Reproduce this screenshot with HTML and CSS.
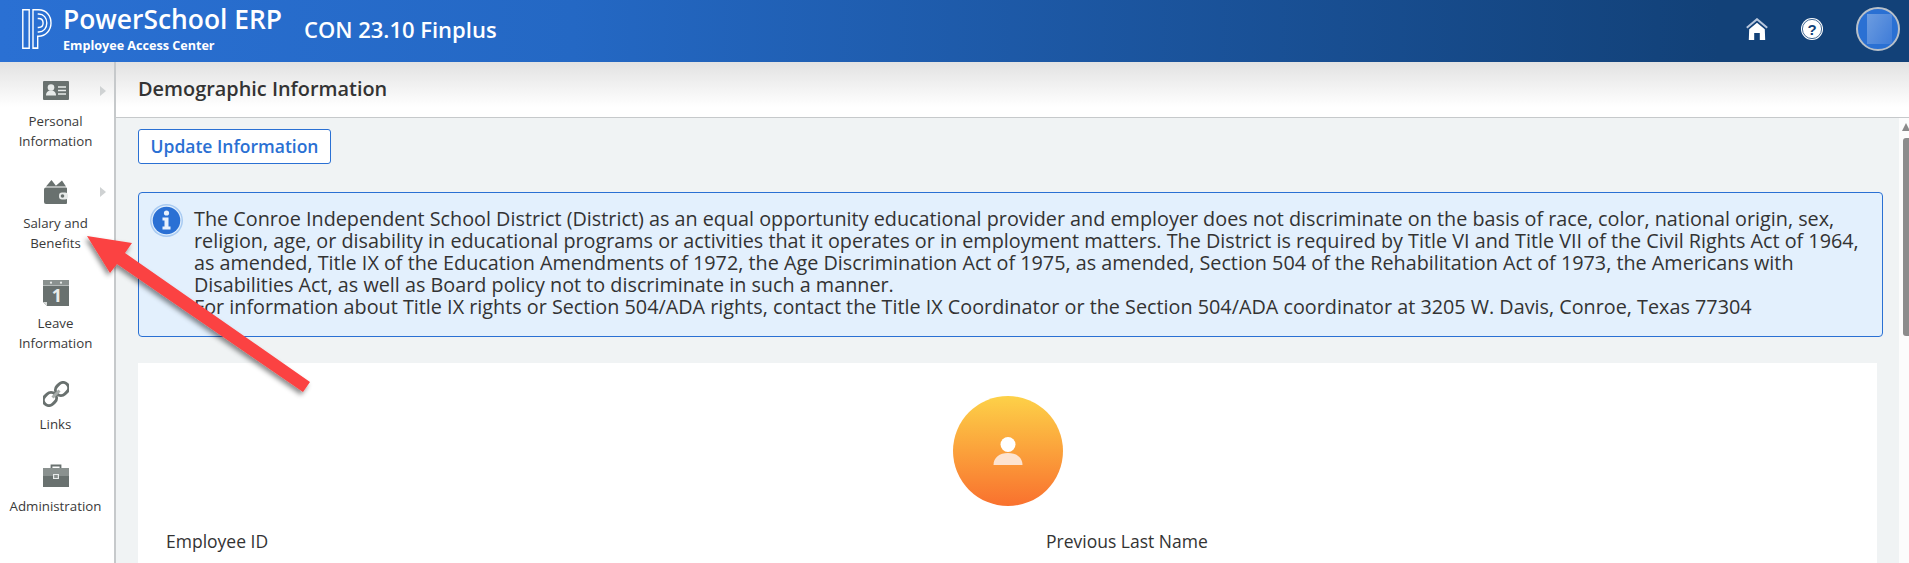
FILE: index.html
```html
<!DOCTYPE html>
<html lang="en">
<head>
<meta charset="utf-8">
<title>Demographic Information</title>
<link rel="stylesheet" href="styles.css">
</head>
<body>
<header class="topbar">
  <svg class="logo" width="30" height="40" viewBox="0 0 30 40" fill="none" stroke="#fff" stroke-width="1.4">
    <path d="M.8.8h6.400v38.400H.8z"/>
    <path d="M11 39.200V.8h5.500C24.500.8 29 7 29 14S24 27.200 16.500 27.200h-.8v12z"/>
    <path d="M11 39.200h4.700"/>
    <path d="M15.700 5h1C21.700 5 24.800 9 24.800 14S21.700 23 16.700 23h-1"/>
    <path d="M15.700 9.500h1c2.800 0 4.400 2 4.400 4.500s-1.600 4.500-4.400 4.500h-1"/>
  </svg>
  <div class="brand">
    <div class="brand-name">PowerSchool ERP</div>
    <div class="brand-sub">Employee Access Center</div>
  </div>
  <div class="env">CON 23.10 Finplus</div>
  <div class="top-actions">
    <svg class="home" width="22" height="22" viewBox="0 0 22 22">
      <path d="M.8 9.800 11 1.200l10.200 8.600" fill="none" stroke="#b9c7dc" stroke-width="2"/>
      <path d="M11 4.800 3.200 11.200 2.800 22h5.400v-7h5.600v7h5.400l-.4-10.800z" fill="#fff"/>
    </svg>
    <svg class="help" width="22" height="22" viewBox="0 0 22 22">
      <circle cx="11" cy="11" r="11" fill="#fff"/>
      <circle cx="11" cy="11" r="9.600" fill="none" stroke="#124178" stroke-width=".8"/>
      <text x="11" y="16.500" text-anchor="middle" class="help-mark">?</text>
    </svg>
    <div class="avatar"><span class="avatar-inner"></span></div>
  </div>
</header>
<div class="shell">
  <nav class="sidebar">
    <a class="nav-item item-personal">
      <span class="nav-icon">
        <svg width="26" height="19" viewBox="0 0 26 19"><path d="M1 0h24a1 1 0 0 1 1 1v17a1 1 0 0 1-1 1H1a1 1 0 0 1-1-1V1a1 1 0 0 1 1-1z" fill="#69716f"/><circle cx="8" cy="6.500" r="3.300" fill="#e8ebea"/><path d="M3 14.500c0-3.500 2-5 5-5s5 1.500 5 5z" fill="#e8ebea"/><path d="M15 6h8M15 9.500h8M15 13h8" stroke="#e8ebea" stroke-width="1.300"/></svg>
      </span>
      <span class="nav-arrow"></span>
      <span class="nav-label">Personal<br>Information</span>
    </a>
    <a class="nav-item item-salary">
      <span class="nav-icon">
        <svg width="24" height="24" viewBox="0 0 24 24"><path d="M2 6.500 7.500 0l5 6.500zM11 6.500 18 .5l4 6z" fill="#69716f"/><path d="M2 7.500h20a1 1 0 0 1 1 1V23a1 1 0 0 1-1 1H2a2 2 0 0 1-2-2V9.500a2 2 0 0 1 2-2z" fill="#69716f"/><rect x="15" y="12.500" width="9" height="7" rx="3" fill="#e8ebea"/><circle cx="18.500" cy="16" r="1.800" fill="#69716f"/></svg>
      </span>
      <span class="nav-arrow"></span>
      <span class="nav-label">Salary and<br>Benefits</span>
    </a>
    <a class="nav-item item-leave">
      <span class="nav-icon">
        <svg width="26" height="26" viewBox="0 0 26 26"><path d="M0 0h26v26H4l-4-4z" fill="#69716f"/><path d="M0 0h26v5H0z" fill="#8a918f"/><path d="M0 5.500h26" stroke="#e8ebea" stroke-width=".6"/><circle cx="8" cy="2.700" r="1.100" fill="#e8ebea"/><circle cx="18" cy="2.700" r="1.100" fill="#e8ebea"/><path d="M0 22h4v4z" fill="#d5d8d7"/><text x="14" y="22" text-anchor="middle" class="cal-num">1</text></svg>
      </span>
      <span class="nav-label">Leave<br>Information</span>
    </a>
    <a class="nav-item item-links">
      <span class="nav-icon">
        <svg width="26" height="26" viewBox="0 0 26 26" fill="none" stroke="#69716f" stroke-width="3"><rect x="13.500" y="1" width="11" height="14" rx="5.500" transform="rotate(45 19 8)"/><rect x="1.500" y="11" width="11" height="14" rx="5.500" transform="rotate(45 7 18)"/><path d="M9.500 16.500l7-7" stroke="#a6acaa"/></svg>
      </span>
      <span class="nav-label">Links</span>
    </a>
    <a class="nav-item item-admin">
      <span class="nav-icon">
        <svg width="26" height="23" viewBox="0 0 26 23"><path d="M8.500 5V1.500h9V5" fill="none" stroke="#69716f" stroke-width="1.800"/><path d="M0 4h26v8H0z" fill="#8a918f"/><path d="M0 12h26v11H0z" fill="#69716f"/><rect x="10" y="10" width="6" height="5" fill="#e8ebea"/><rect x="11.200" y="11" width="3.600" height="3" fill="#8a918f"/></svg>
      </span>
      <span class="nav-label">Administration</span>
    </a>
  </nav>
  <main class="main">
    <div class="page-title">Demographic Information</div>
    <div class="content">
      <button class="btn-outline">Update Information</button>
      <div class="notice">
        <svg class="notice-icon" width="33" height="33" viewBox="0 0 33 33">
          <circle cx="16.500" cy="16.500" r="16.500" fill="#a9cbf2"/>
          <circle cx="16.500" cy="16.500" r="15" fill="#e3f0fd"/>
          <circle cx="16.500" cy="16.500" r="13.800" fill="#2a70d4"/>
          <circle cx="16.500" cy="9" r="2.600" fill="#e8f1fc"/>
          <path d="M12.500 13.500h6v9h2v3h-8v-3h2v-6h-2z" fill="#e8f1fc"/>
        </svg>
        <div class="notice-text">The Conroe Independent School District (District) as an equal opportunity educational provider and employer does not discriminate on the basis of race, color, national origin, sex, religion, age, or disability in educational programs or activities that it operates or in employment matters. The District is required by Title VI and Title VII of the Civil Rights Act of 1964, as amended, Title IX of the Education Amendments of 1972, the Age Discrimination Act of 1975, as amended, Section 504 of the Rehabilitation Act of 1973, the Americans with Disabilities Act, as well as Board policy not to discriminate in such a manner.<br>For information about Title IX rights or Section 504/ADA rights, contact the Title IX Coordinator or the Section 504/ADA coordinator at 3205 W. Davis, Conroe, Texas 77304</div>
      </div>
      <section class="card">
        <div class="photo">
          <svg width="30" height="30" viewBox="0 0 30 30"><circle cx="15" cy="8.500" r="7.500" fill="#fff"/><path d="M0.500 29c0-7.500 6-12 14.500-12s14.500 4.500 14.500 12z" fill="#fde3cf"/></svg>
        </div>
        <div class="fields">
          <div class="field">Employee ID</div>
          <div class="field">Previous Last Name</div>
        </div>
      </section>
    </div>
    <div class="scroller"><span class="scroll-up"></span><span class="scroll-thumb"></span></div>
  </main>
</div>
<svg class="annotation" width="340" height="200" viewBox="0 0 340 200">
  <defs><filter id="sh" x="-10%" y="-10%" width="120%" height="120%"><feDropShadow dx="-2" dy="3" stdDeviation="2.500" flood-color="#000" flood-opacity=".45"/></filter></defs>
  <path d="M87 16l45 7-7 10 185 129-7 10L117 44l-7 9z" fill="#fb4242" filter="url(#sh)"/>
</svg>
</body>
</html>
```
FILE: styles.css
```css
* { box-sizing: border-box; }
html, body { margin: 0; height: 100%; overflow: hidden; }
body { font-family: "Open Sans", "Noto Sans", sans-serif; color: #333; background: #fff; position: relative; }

.topbar {
  height: 62px;
  display: flex;
  align-items: flex-start;
  padding-left: 22px;
  background: linear-gradient(90deg, #2a70d3 0%, #2468c4 30%, #124178 90%, #124178 100%);
  color: #fff;
}
.logo { flex: none; margin: 9px 11px 0 0; }
.brand { display: flex; flex-direction: column; width: 241px; padding-top: 4px; }
.brand-name { font-size: 26.400px; line-height: 30px; font-weight: 600; }
.brand-sub { font-size: 12.600px; line-height: 15px; font-weight: 700; margin-top: 4px; }
.env { font-size: 22px; font-weight: 600; line-height: 28px; margin-top: 15px; }
.top-actions { margin-left: auto; display: flex; align-items: center; padding: 7px 9px 0 0; }
.home { margin-right: 33px; }
.help { margin-right: 33px; }
.help-mark { font: 700 15px "Liberation Sans", sans-serif; fill: #124178; }
.avatar {
  width: 44px; height: 44px; border-radius: 50%;
  border: 2px solid #b8c0c9;
  background: #2a70d3;
  display: flex; align-items: center; justify-content: flex-end;
  padding-right: 6px;
  overflow: hidden;
}
.avatar-inner { width: 25px; height: 30px; background: linear-gradient(120deg, #6c9ce0, #3f7cd8); }

.shell { display: flex; height: 501px; overflow: hidden; }
.sidebar {
  width: 116px; flex: none;
  border-right: 2px solid #c6c9cb;
  background: linear-gradient(180deg, #e2e2e2 0, #fff 45px);
  padding: 19px 3px 0 0;
}
.nav-item { display: block; position: relative; text-align: center; color: #3a3a3a; font-size: 13.300px; line-height: 19.500px; }
.nav-icon { display: flex; justify-content: center; }
.nav-label { display: block; }
.nav-arrow {
  position: absolute; right: 5px; top: 5px;
  border-left: 6px solid #cfd2d3; border-top: 5px solid transparent; border-bottom: 5px solid transparent;
}
.item-personal .nav-label { margin-top: 12px; }
.item-salary { margin-top: 29px; }
.item-salary .nav-label { margin-top: 10px; }
.item-salary .nav-arrow { top: 7px; }
.item-leave { margin-top: 27px; }
.item-leave .nav-label { margin-top: 8px; }
.cal-num { font: 700 18px "Open Sans", sans-serif; fill: #e8ebea; }
.item-links { margin-top: 28px; }
.item-links .nav-label { margin-top: 8px; }
.item-admin { margin-top: 29px; }
.item-admin .nav-label { margin-top: 10px; }

.main { flex: 1; min-width: 0; position: relative; overflow: hidden; background: #f0f3f4; display: flex; flex-direction: column; }
.page-title {
  height: 56px; flex: none;
  background: linear-gradient(180deg, #e2e2e2 0, #fff 45px);
  border-bottom: 1px solid #c6c9cb;
  font-size: 19.900px; font-weight: 600; color: #333;
  padding: 14px 0 0 22px; line-height: 25px;
}
.content { padding: 11px 26px 0 22px; }
.btn-outline {
  display: block;
  width: 193px; height: 35px;
  padding: 0;
  background: #fff;
  border: 1px solid #2a70d3;
  border-radius: 3px;
  color: #2a70d3;
  font: 600 17.500px/33px "Open Sans", sans-serif;
}
.notice {
  margin-top: 28px;
  height: 145px;
  background: #e3f0fd;
  border: 1px solid #2a70d3;
  border-radius: 4px;
  display: flex;
  padding: 11px 0 0 11px;
}
.notice-icon { flex: none; margin-right: 11px; }
.notice-text { font-size: 19.800px; line-height: 22px; color: #333; margin-top: 4px; padding-right: 12px; }
.card { margin: 26px 6px 0 0; background: #fff; height: 230px; }
.photo {
  width: 110px; height: 110px; border-radius: 50%;
  margin: 0 auto;
  position: relative; top: 33px;
  background: linear-gradient(180deg, #fdd148 0%, #f9712e 100%);
  display: flex; align-items: center; justify-content: center;
}
.fields { display: grid; grid-template-columns: 880px 1fr; padding: 56px 0 0 28px; }
.field { font-size: 17.500px; line-height: 24px; color: #333; }
.scroller { position: absolute; right: 0; top: 56px; bottom: 0; width: 10px; background: #fcfcfc; }
.scroll-up { position: absolute; left: 3px; top: 5px; border-left: 4px solid transparent; border-right: 4px solid transparent; border-bottom: 8px solid #8a8a8a; }
.scroll-thumb { position: absolute; left: 4px; top: 20px; width: 6px; height: 198px; background: #8c8c8c; border-radius: 3px 0 0 3px; }

.annotation { position: absolute; left: 0; top: 220px; pointer-events: none; }
```
